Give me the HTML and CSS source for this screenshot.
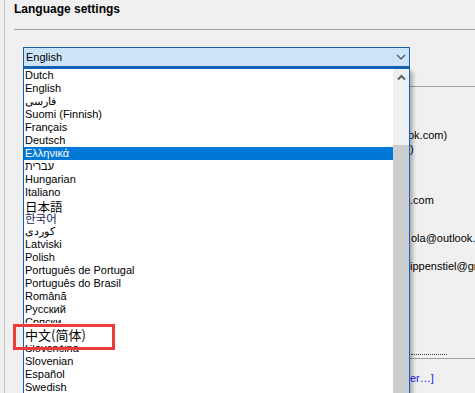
FILE: index.html
```html
<!DOCTYPE html>
<html lang="en">
<head>
<meta charset="utf-8">
<title>Language settings</title>
<link rel="stylesheet" href="styles.css">
</head>
<body>
<div class="dialog">
  <div class="title">Language settings</div>
  <div class="rule"></div>
  <div class="combo-wrap">
    <div class="combo">
      <span class="combo-value">English</span>
      <svg class="combo-chevron" width="10" height="6" viewBox="0 0 10 6"><path d="M1 1 L5 5 L9 1" fill="none" stroke="#4a4a4a" stroke-width="1.1"/></svg>
    </div>
    <div class="dropdown">
      <ul class="options">
        <li>Dutch</li>
        <li>English</li>
        <li lang="fa">فارسی</li>
        <li>Suomi (Finnish)</li>
        <li>Français</li>
        <li>Deutsch</li>
        <li class="selected">Ελληνικά</li>
        <li lang="he">עברית</li>
        <li>Hungarian</li>
        <li>Italiano</li>
        <li class="ja">日本語</li>
        <li class="ko">한국어</li>
        <li lang="ckb">کوردی</li>
        <li>Latviski</li>
        <li>Polish</li>
        <li>Português de Portugal</li>
        <li>Português do Brasil</li>
        <li>Română</li>
        <li>Русский</li>
        <li>Српски</li>
        <li class="zh">中文(简体)</li>
        <li>Slovenčina</li>
        <li>Slovenian</li>
        <li>Español</li>
        <li>Swedish</li>
      </ul>
      <div class="scrollbar">
        <div class="sb-track">
          <svg class="sb-arrow" width="9" height="7" viewBox="0 0 9 7"><path d="M1 5.5 L4.5 2 L8 5.5" fill="none" stroke="#606060" stroke-width="2"/></svg>
        </div>
        <div class="sb-thumb"></div>
      </div>
    </div>
  </div>
  <div class="behind">
    <div class="hline"></div>
    <div class="bline l1">ok.com)</div>
    <div class="bline l2">)</div>
    <div class="bline l3">.com</div>
    <div class="bline l4">ola@outlook.com</div>
    <div class="bline l5">ippenstiel@gmail.com</div>
    <div class="frag"></div>
    <div class="hline h2"></div>
    <div class="bline l6 link">er…]</div>
  </div>
</div>
<div class="callout"></div>
</body>
</html>
```

FILE: styles.css
```css
html, body {
  margin: 0;
  padding: 0;
}
body {
  width: 475px;
  height: 393px;
  overflow: hidden;
  background: #f0f0f0;
  font-family: "Liberation Sans", Arial, sans-serif;
  font-size: 11px;
  color: #000;
  position: relative;
}
.dialog {
  margin-left: 4px;
  border-left: 1px solid #c4c4c4;
  padding-left: 9px;
  height: 393px;
  box-sizing: border-box;
}
.title {
  padding-top: 1px;
  font-weight: bold;
  font-size: 12px;
  line-height: 16px;
}
.rule {
  margin-top: 12px;
  height: 1px;
  background: #a0a0a0;
}
.combo-wrap {
  position: relative;
  margin-top: 17px;
  margin-left: 9px;
  width: 387px;
}
.combo {
  height: 21px;
  box-sizing: border-box;
  border: 1px solid #1a5fac;
  border-bottom-width: 2px;
  background: #cce4f7;
  display: flex;
  align-items: center;
  justify-content: space-between;
  padding: 0 3px 0 2px;
}
.combo-value {
  line-height: 18px;
}
.combo-chevron {
  display: block;
}
.dropdown {
  position: absolute;
  z-index: 2;
  top: 100%;
  left: 0;
  width: 387px;
  height: 340px;
  box-sizing: border-box;
  border: 1px solid #0a64c2;
  background: #fff;
  display: flex;
  box-shadow: 3px 3px 4px rgba(0, 0, 0, 0.28);
}
.options {
  list-style: none;
  margin: 0;
  padding: 0;
  flex: 1;
}
.options li {
  height: 13px;
  line-height: 13px;
  padding-left: 1px;
  white-space: nowrap;
  direction: ltr;
  text-align: left;
  unicode-bidi: plaintext;
}
.options li.selected {
  background: #0078d7;
  color: #fff;
}
.options li.ja {
  font-family: "Noto Sans CJK JP", sans-serif;
  font-size: 12.5px;
  line-height: 15px;
  height: 13px;
}
.options li.ko {
  font-family: "Noto Sans CJK KR", sans-serif;
  font-size: 11.5px;
  color: #1a1a60;
}
.options li.zh {
  position: relative;
  z-index: 1;
  background: #fff;
  height: 22px;
  margin: -6px 0 -3px;
  padding-top: 1px;
  box-sizing: border-box;
  font-family: "Noto Sans CJK SC", sans-serif;
  font-size: 13px;
  line-height: 22px;
}
.scrollbar {
  width: 16px;
  display: flex;
  flex-direction: column;
}
.sb-track {
  height: 76px;
  background: #f0f0f0;
  display: flex;
  justify-content: center;
  padding-top: 5px;
  box-sizing: border-box;
}
.sb-arrow {
  display: block;
}
.sb-thumb {
  flex: 1;
  background: #cdcdcd;
}
.behind {
  margin-left: 280px;
}
.hline {
  margin-top: 18px;
  height: 1px;
  background: #a0a0a0;
}
.bline {
  height: 14px;
  line-height: 14px;
  padding-left: 114px;
  white-space: nowrap;
}
.l1 { margin-top: 41px; }
.l2 { margin-top: 0; padding-left: 116px; }
.l3 { margin-top: 37px; padding-left: 116px; }
.l4 { margin-top: 24px; padding-left: 117px; }
.l5 { margin-top: 14px; padding-left: 116px; }
.frag {
  margin-top: 78px;
  margin-left: 117px;
  width: 36px;
  height: 3px;
  border-bottom: 1px dotted #404040;
}
.hline.h2 {
  margin-top: 3px;
}
.l6 { margin-top: 12px; padding-left: 116px; }
.link {
  color: #1a1aff;
}
.callout {
  position: absolute;
  left: 13px;
  top: 324px;
  width: 102px;
  height: 26px;
  box-sizing: border-box;
  border: 3px solid #ee3b3b;
  z-index: 5;
}
```
